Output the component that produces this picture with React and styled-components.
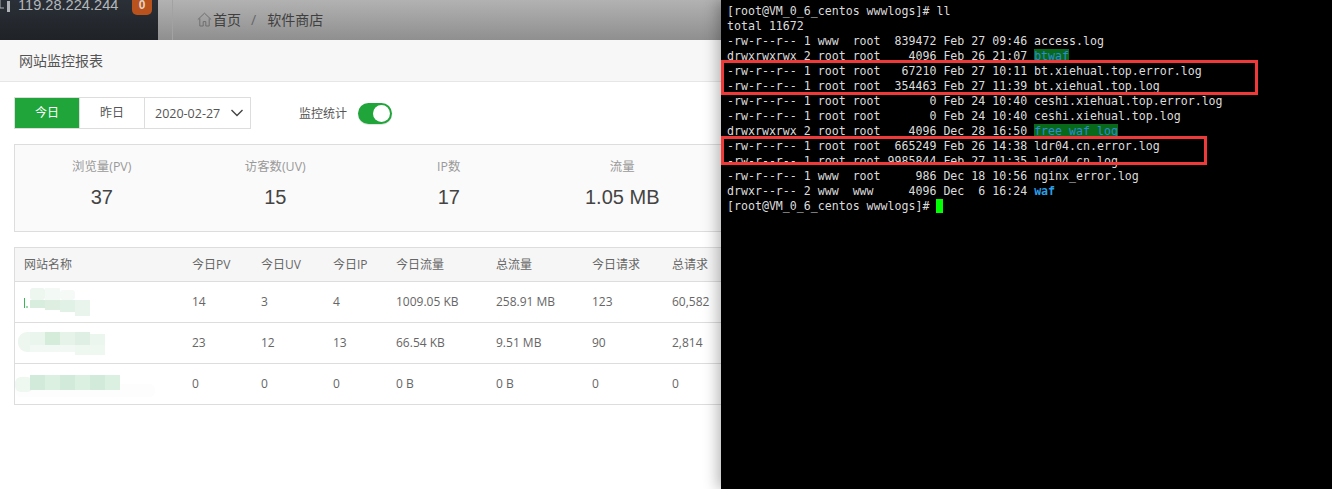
import React from 'react';
import styled, { createGlobalStyle } from 'styled-components';

const columns = '177px 69px 72px 63px 100px 96px 80px 90px';

const stats = [
  { label: '浏览量(PV)', value: '37' },
  { label: '访客数(UV)', value: '15' },
  { label: 'IP数', value: '17' },
  { label: '流量', value: '1.05 MB' },
];

const headers = ['网站名称', '今日PV', '今日UV', '今日IP', '今日流量', '总流量', '今日请求', '总请求'];

const rows = [
  { blur: 'a', cells: ['14', '3', '4', '1009.05 KB', '258.91 MB', '123', '60,582'] },
  { blur: 'b', cells: ['23', '12', '13', '66.54 KB', '9.51 MB', '90', '2,814'] },
  { blur: 'c', cells: ['0', '0', '0', '0 B', '0 B', '0', '0'] },
];

const terminal = [
  { text: '[root@VM_0_6_centos wwwlogs]# ll' },
  { text: 'total 11672' },
  { text: '-rw-r--r-- 1 www  root  839472 Feb 27 09:46 access.log' },
  { text: 'drwxrwxrwx 2 root root    4096 Feb 26 21:07 ', dir: 'btwaf' },
  { text: '-rw-r--r-- 1 root root   67210 Feb 27 10:11 bt.xiehual.top.error.log' },
  { text: '-rw-r--r-- 1 root root  354463 Feb 27 11:39 bt.xiehual.top.log' },
  { text: '-rw-r--r-- 1 root root       0 Feb 24 10:40 ceshi.xiehual.top.error.log' },
  { text: '-rw-r--r-- 1 root root       0 Feb 24 10:40 ceshi.xiehual.top.log' },
  { text: 'drwxrwxrwx 2 root root    4096 Dec 28 16:50 ', dir: 'free_waf_log' },
  { text: '-rw-r--r-- 1 root root  665249 Feb 26 14:38 ldr04.cn.error.log' },
  { text: '-rw-r--r-- 1 root root 9985844 Feb 27 11:35 ldr04.cn.log' },
  { text: '-rw-r--r-- 1 www  root     986 Dec 18 10:56 nginx_error.log' },
  { text: 'drwxr--r-- 2 www  www     4096 Dec  6 16:24 ', plainDir: 'waf' },
];

function NameBlur({ kind }) {
  if (kind === 'a') {
    return (
      <BlurSvg viewBox="0 0 150 40">
        <rect x="9" y="16" width="1" height="10" fill="#3cb55a" />
        <rect x="11" y="24" width="2" height="2" fill="#9fd8ae" />
        <rect x="15" y="6" width="15" height="12" rx="3" fill="#eef6f0" />
        <rect x="30" y="6" width="15" height="12" fill="#f3f9f5" />
        <rect x="45" y="8" width="15" height="10" rx="3" fill="#f6faf7" />
        <rect x="15" y="18" width="15" height="8" fill="#d8eddd" />
        <rect x="30" y="18" width="15" height="10" fill="#deefe2" />
        <rect x="45" y="18" width="15" height="12" fill="#e2f1e6" />
        <rect x="60" y="18" width="15" height="16" fill="#e9f4ec" />
      </BlurSvg>
    );
  }
  if (kind === 'b') {
    return (
      <BlurSvg viewBox="0 0 150 40">
        <rect x="3" y="9" width="22" height="20" rx="9" fill="#eef6f0" />
        <rect x="15" y="9" width="15" height="13" fill="#eaf5ed" />
        <rect x="30" y="9" width="15" height="13" fill="#d6ecdb" />
        <rect x="45" y="9" width="15" height="13" fill="#e6f3e9" />
        <rect x="60" y="9" width="15" height="13" fill="#dfefe3" />
        <rect x="75" y="11" width="15" height="11" fill="#ebf6ee" />
        <rect x="15" y="22" width="60" height="7" fill="#f2f8f4" />
        <rect x="60" y="22" width="30" height="10" fill="#eff7f1" />
      </BlurSvg>
    );
  }
  return (
    <BlurSvg viewBox="0 0 150 40">
      <rect x="0" y="20" width="140" height="13" rx="6" fill="#fcfdfc" />
      <rect x="0" y="13" width="18" height="15" rx="6" fill="#eef7f0" />
      <rect x="15" y="11" width="15" height="15" fill="#d2eada" />
      <rect x="30" y="11" width="15" height="15" fill="#dcf0e2" />
      <rect x="45" y="11" width="15" height="15" fill="#d2eada" />
      <rect x="60" y="11" width="15" height="15" fill="#dcf0e2" />
      <rect x="75" y="11" width="15" height="15" fill="#d2eada" />
      <rect x="90" y="11" width="15" height="15" fill="#dcf0e2" />
    </BlurSvg>
  );
}

function App() {
  return (
    <Page>
      <GlobalStyle />
      <Main>
        <TopBar>
          <Brand>
            <ServerIcon viewBox="0 0 10 12">
              <path d="M0 0v8h4" fill="none" stroke="#aeb2b6" strokeWidth="1" />
              <rect x="7" y="1" width="3" height="11" fill="#aeb2b6" />
            </ServerIcon>
            <Ip>119.28.224.244</Ip>
            <Badge>0</Badge>
          </Brand>
          <Crumbs>
            <svg width="15" height="15" viewBox="0 0 15 15" fill="none" stroke="#6f6f6f" strokeWidth="1">
              <path d="M0.8 7.6 7.5 1.2l6.7 6.4M2.8 6.4v7.6h3.4V9.6h2.6V14h3.4V6.4" />
            </svg>
            <CrumbText>首页</CrumbText>
            <CrumbSep>/</CrumbSep>
            <CrumbText>软件商店</CrumbText>
          </Crumbs>
        </TopBar>

        <PanelHead>网站监控报表</PanelHead>

        <Toolbar>
          <DateGroup>
            <DayButton $active>今日</DayButton>
            <DayButton>昨日</DayButton>
            <DatePicker>
              <span>2020-02-27</span>
              <svg width="14" height="8" viewBox="0 0 14 8" fill="none" stroke="#444" strokeWidth="1.4">
                <path d="M1.5 1 7 6.5 12.5 1" />
              </svg>
            </DatePicker>
          </DateGroup>
          <ToggleLabel>监控统计</ToggleLabel>
          <Toggle />
        </Toolbar>

        <StatsBox>
          {stats.map((s) => (
            <Stat key={s.label}>
              <StatLabel>{s.label}</StatLabel>
              <StatValue>{s.value}</StatValue>
            </Stat>
          ))}
        </StatsBox>

        <Table>
          <HeadRow>
            {headers.map((h, i) => (
              <Cell key={h} $first={i === 0}>{h}</Cell>
            ))}
          </HeadRow>
          {rows.map((row) => (
            <Row key={row.blur}>
              <NameCell>
                <NameBlur kind={row.blur} />
              </NameCell>
              {row.cells.map((c, i) => (
                <Cell key={i}>{c}</Cell>
              ))}
            </Row>
          ))}
        </Table>
      </Main>

      <Terminal>
        {terminal.map((line, i) => (
          <Line key={i}>
            {line.text}
            {line.dir && <DirName>{line.dir}</DirName>}
            {line.plainDir && <PlainDir>{line.plainDir}</PlainDir>}
          </Line>
        ))}
        <Line>
          [root@VM_0_6_centos wwwlogs]# <Cursor />
        </Line>
        <Highlight $top={60} $width={537} $height={35} />
        <Highlight $top={136} $width={486} $height={29} />
      </Terminal>
    </Page>
  );
}

const GlobalStyle = createGlobalStyle`
  html, body {
    margin: 0;
    padding: 0;
    background: #fff;
  }
  body {
    font-family: "Open Sans", "Noto Sans CJK SC", sans-serif;
  }
`;

const Page = styled.div`
  display: flex;
  width: 1332px;
  height: 489px;
  overflow: hidden;
`;

const Main = styled.div`
  width: 721px;
  flex: none;
  overflow: hidden;
  background: #fff;
`;

const TopBar = styled.div`
  display: flex;
  height: 40px;
  background: linear-gradient(#b2b2b2, #8f8f8f);
`;

const Brand = styled.div`
  display: flex;
  align-items: flex-start;
  width: 158px;
  flex: none;
  background: linear-gradient(#2b3038, #1f2226);
  overflow: hidden;
`;

const ServerIcon = styled.svg`
  width: 10px;
  height: 12px;
  flex: none;
`;

const Ip = styled.div`
  margin: -5px 0 0 8px;
  width: 114px;
  font: 14.6px/20px "Liberation Sans", sans-serif;
  color: #b4b8ba;
  white-space: nowrap;
`;

const Badge = styled.div`
  width: 20px;
  height: 15px;
  border-radius: 0 0 5px 5px;
  background: #b9521c;
  color: #e3d3c5;
  font: bold 12px/11px "Liberation Sans", sans-serif;
  text-align: center;
`;

const Crumbs = styled.div`
  display: flex;
  align-items: center;
  flex: 1;
  height: 40px;
  margin-left: 14px;
  padding: 0 0 2px 24px;
  border-left: 1px solid #a2a2a2;
  box-sizing: border-box;
  color: #3f3f3f;
  font-size: 14px;
`;

const CrumbText = styled.span`
  margin-left: 1px;
`;

const CrumbSep = styled.span`
  margin: 0 10px 0 10px;
  color: #666;
`;

const PanelHead = styled.div`
  height: 41px;
  padding-left: 19px;
  box-sizing: content-box;
  background: #f7f7f7;
  border-bottom: 1px solid #e6e6e6;
  color: #555;
  font-size: 14px;
  line-height: 41px;
`;

const Toolbar = styled.div`
  display: flex;
  align-items: center;
  margin: 15px 0 0 14px;
  height: 32px;
`;

const DateGroup = styled.div`
  display: flex;
  height: 32px;
  box-sizing: border-box;
  border: 1px solid #ddd;
  font-size: 12px;
`;

const DayButton = styled.div`
  width: 64px;
  border-right: 1px solid #ddd;
  background: ${(p) => (p.$active ? '#20a53a' : '#fff')};
  color: ${(p) => (p.$active ? '#fff' : '#555')};
  text-align: center;
  line-height: 30px;
`;

const DatePicker = styled.div`
  display: flex;
  align-items: center;
  gap: 10px;
  width: 105px;
  padding-left: 10px;
  box-sizing: border-box;
  color: #555;
  font-size: 12.5px;
`;

const ToggleLabel = styled.div`
  margin-left: 48px;
  color: #555;
  font-size: 12px;
`;

const Toggle = styled.div`
  position: relative;
  width: 34px;
  height: 21px;
  margin-left: 11px;
  border-radius: 11px;
  background: #20a53a;
  box-shadow: 0 1px 1px rgba(0, 0, 0, 0.12);

  &::after {
    content: '';
    position: absolute;
    top: 2px;
    right: 2px;
    width: 17px;
    height: 17px;
    border-radius: 50%;
    background: #fff;
  }
`;

const StatsBox = styled.div`
  display: flex;
  width: 900px;
  height: 88px;
  margin: 15px 0 0 14px;
  box-sizing: border-box;
  border: 1px solid #ddd;
  background: #fafafa;
`;

const Stat = styled.div`
  width: 173.5px;
  flex: none;
  padding-top: 13px;
  text-align: center;
`;

const StatLabel = styled.div`
  color: #999;
  font-size: 12.4px;
  line-height: 17px;
`;

const StatValue = styled.div`
  margin-top: 9px;
  color: #444;
  font: 20px/26px "Liberation Sans", sans-serif;
`;

const Table = styled.div`
  width: 900px;
  margin: 15px 0 0 14px;
  box-sizing: border-box;
  border: 1px solid #ddd;
  border-bottom: 0;
  font-size: 12px;
  color: #666;
`;

const Row = styled.div`
  display: grid;
  grid-template-columns: ${columns};
  height: 41px;
  box-sizing: border-box;
  border-bottom: 1px solid #ddd;
`;

const HeadRow = styled(Row)`
  height: 34px;
  background: #f6f6f6;
`;

const Cell = styled.div`
  display: flex;
  align-items: center;
  padding: 0 0 1px ${(p) => (p.$first ? '9px' : '0')};
  white-space: nowrap;
`;

const NameCell = styled.div`
  overflow: hidden;
`;

const BlurSvg = styled.svg`
  display: block;
  width: 150px;
  height: 40px;
`;

const Terminal = styled.div`
  position: relative;
  flex: 1;
  padding: 4px 0 0 6px;
  background: #000;
  box-shadow: -3px 0 14px rgba(0, 0, 0, 0.3);
  color: #dcdcdc;
  font: 11.6px/15px "DejaVu Sans Mono", monospace;
`;

const Line = styled.div`
  height: 15px;
  white-space: pre;
`;

const DirName = styled.span`
  background: #08691a;
  color: #2f8ad8;
`;

const PlainDir = styled.span`
  color: #2c9fe6;
  font-weight: bold;
`;

const Cursor = styled.span`
  display: inline-block;
  width: 7px;
  height: 14px;
  vertical-align: -3px;
  background: #00ff00;
`;

const Highlight = styled.div`
  position: absolute;
  top: ${(p) => p.$top}px;
  left: 0;
  width: ${(p) => p.$width}px;
  height: ${(p) => p.$height}px;
  box-sizing: border-box;
  border: 3px solid #f03a3a;
`;

export default App;
